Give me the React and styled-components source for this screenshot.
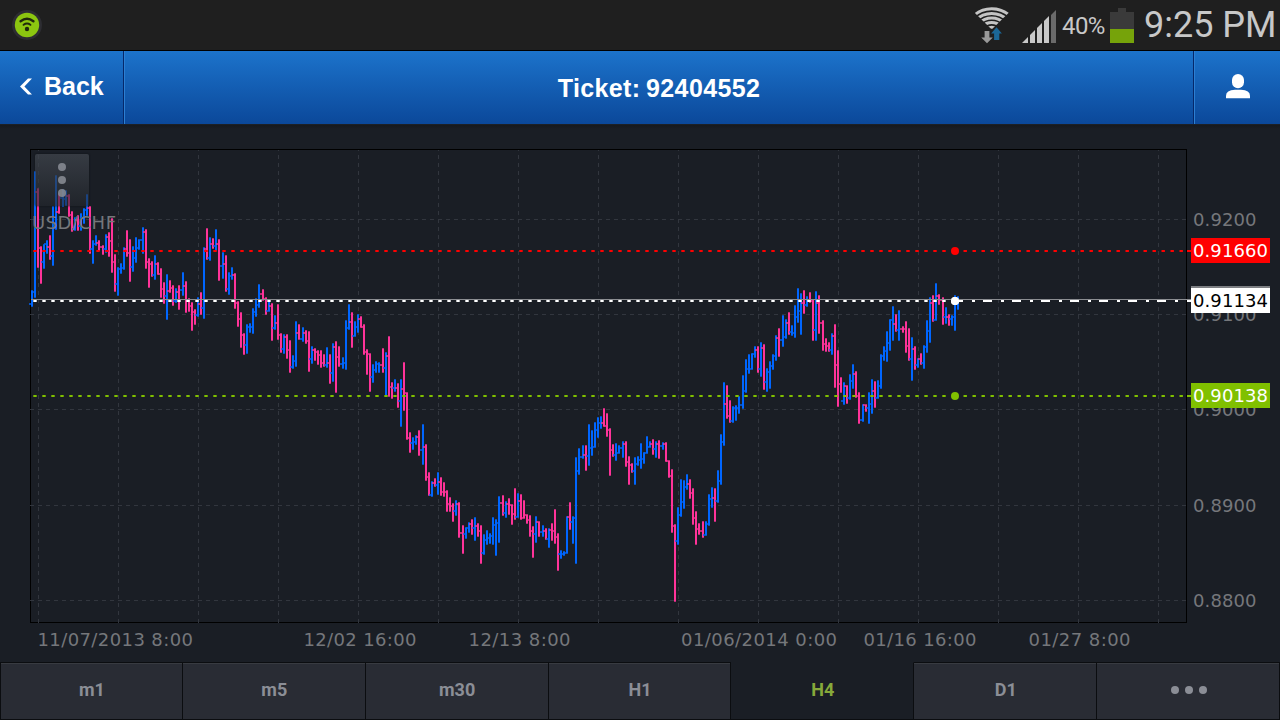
import React from "react";
import styled, { createGlobalStyle } from "styled-components";

const UP = "#0066ff";
const DOWN = "#ff3399";

// x, high, low, open, direction (1 = up)
const bars = [
  [32, 290, 307, 304, 1], [35, 171, 298, 292, 1], [38, 188, 268, 192, 0],
  [41, 246, 284, 248, 0], [44, 244, 269, 262, 1], [47, 240, 254, 244, 1],
  [50, 235, 260, 247, 0], [53, 206, 266, 256, 1], [56, 175, 230, 228, 1],
  [59, 193, 214, 212, 0], [63, 189, 207, 198, 1], [66, 190, 206, 199, 1],
  [69, 194, 217, 196, 0], [72, 211, 232, 215, 0], [75, 217, 231, 229, 1],
  [78, 215, 231, 220, 0], [81, 213, 231, 226, 1], [84, 208, 224, 218, 1],
  [87, 194, 216, 210, 1], [90, 206, 254, 208, 0], [93, 240, 264, 249, 1],
  [96, 235, 246, 244, 1], [99, 240, 251, 243, 0], [103, 245, 255, 247, 0],
  [106, 234, 253, 249, 1], [109, 232, 257, 237, 0], [112, 218, 273, 241, 0],
  [115, 254, 292, 262, 0], [118, 267, 296, 284, 1], [121, 263, 274, 269, 1],
  [124, 247, 270, 268, 1], [127, 230, 257, 249, 0], [130, 239, 282, 253, 0],
  [133, 246, 272, 267, 1], [136, 237, 263, 258, 1], [139, 239, 250, 248, 1],
  [143, 227, 254, 240, 1], [146, 229, 269, 232, 0], [149, 258, 288, 262, 0],
  [152, 261, 277, 264, 0], [155, 255, 280, 275, 1], [158, 262, 275, 264, 0],
  [161, 268, 298, 274, 0], [164, 282, 304, 289, 0], [167, 274, 320, 296, 1],
  [170, 280, 293, 291, 0], [173, 285, 306, 288, 0], [176, 288, 303, 301, 1],
  [179, 285, 310, 292, 0], [183, 272, 296, 290, 1], [186, 281, 313, 286, 0],
  [189, 298, 312, 300, 0], [192, 302, 331, 306, 0], [195, 309, 325, 312, 0],
  [198, 297, 317, 315, 1], [201, 292, 315, 304, 0], [204, 247, 319, 308, 1],
  [207, 228, 260, 249, 0], [210, 237, 261, 258, 1], [213, 238, 249, 244, 0],
  [216, 229, 251, 246, 1], [219, 239, 281, 244, 0], [223, 252, 279, 266, 1],
  [226, 255, 292, 264, 0], [229, 272, 295, 289, 1], [232, 267, 280, 276, 1],
  [235, 273, 309, 275, 0], [238, 301, 327, 303, 0], [241, 312, 348, 319, 0],
  [244, 333, 355, 335, 0], [247, 324, 354, 345, 1], [250, 323, 333, 327, 1],
  [253, 308, 334, 327, 1], [256, 298, 317, 312, 1], [259, 284, 308, 305, 1],
  [263, 289, 301, 294, 0], [266, 297, 315, 299, 0], [269, 301, 312, 311, 1],
  [272, 303, 341, 306, 0], [275, 315, 330, 328, 1], [278, 304, 340, 323, 0],
  [281, 333, 353, 335, 0], [284, 334, 354, 349, 1], [287, 334, 359, 337, 0],
  [290, 340, 373, 350, 0], [293, 355, 369, 367, 1], [296, 321, 367, 361, 1],
  [299, 324, 340, 333, 0], [303, 327, 342, 339, 1], [306, 330, 344, 333, 0],
  [309, 331, 372, 341, 0], [312, 346, 364, 359, 1], [315, 348, 361, 350, 0],
  [318, 350, 365, 352, 0], [321, 350, 368, 355, 0], [324, 354, 367, 363, 0],
  [327, 347, 368, 365, 1], [330, 354, 384, 363, 0], [333, 343, 382, 373, 1],
  [336, 341, 393, 347, 0], [339, 346, 367, 357, 0], [343, 357, 369, 364, 1],
  [346, 320, 370, 363, 1], [349, 304, 330, 328, 1], [352, 312, 348, 322, 0],
  [355, 321, 337, 336, 1], [358, 314, 333, 327, 1], [361, 316, 328, 319, 0],
  [364, 324, 355, 327, 0], [367, 349, 375, 352, 0], [370, 353, 392, 354, 0],
  [373, 364, 383, 377, 1], [376, 361, 373, 370, 1], [379, 362, 373, 364, 1],
  [383, 348, 373, 365, 0], [386, 352, 397, 368, 1], [389, 336, 397, 356, 0],
  [392, 382, 399, 387, 0], [395, 379, 392, 388, 1], [398, 383, 408, 388, 0],
  [401, 379, 427, 401, 1], [404, 362, 411, 389, 0], [407, 392, 440, 393, 0],
  [410, 432, 453, 438, 0], [413, 437, 450, 443, 1], [416, 435, 445, 442, 1],
  [419, 430, 456, 437, 0], [423, 424, 465, 450, 1], [426, 444, 481, 447, 0],
  [429, 472, 496, 477, 0], [432, 481, 497, 495, 1], [435, 478, 487, 483, 0],
  [438, 472, 495, 485, 1], [441, 477, 496, 482, 0], [444, 482, 497, 492, 0],
  [447, 490, 512, 492, 0], [450, 497, 512, 504, 0], [453, 503, 522, 506, 0],
  [456, 500, 516, 511, 1], [459, 502, 538, 504, 0], [463, 525, 554, 533, 0],
  [466, 527, 539, 534, 1], [469, 522, 533, 528, 1], [472, 519, 535, 524, 0],
  [475, 517, 541, 528, 1], [478, 523, 537, 526, 0], [481, 525, 564, 531, 0],
  [484, 534, 555, 553, 1], [487, 530, 545, 540, 1], [490, 533, 544, 538, 1],
  [493, 517, 545, 536, 1], [496, 519, 556, 525, 1], [499, 496, 543, 523, 1],
  [503, 495, 516, 503, 0], [506, 501, 518, 513, 1], [509, 498, 515, 504, 0],
  [512, 504, 525, 505, 0], [515, 488, 520, 514, 0], [518, 493, 518, 517, 1],
  [521, 494, 520, 501, 0], [524, 500, 519, 518, 0], [527, 514, 524, 515, 0],
  [530, 515, 537, 520, 0], [533, 526, 558, 531, 0], [536, 516, 543, 534, 1],
  [539, 521, 537, 522, 0], [543, 525, 537, 532, 1], [546, 528, 540, 531, 0],
  [549, 528, 548, 539, 1], [552, 523, 541, 530, 0], [555, 509, 544, 531, 0],
  [558, 533, 571, 537, 0], [561, 550, 559, 554, 1], [564, 551, 556, 554, 1],
  [567, 516, 554, 553, 1], [570, 502, 530, 517, 0], [573, 516, 544, 522, 1],
  [576, 457, 564, 518, 1], [579, 448, 475, 471, 1], [583, 445, 459, 457, 1],
  [586, 445, 471, 455, 0], [589, 424, 466, 456, 1], [592, 430, 456, 448, 1],
  [595, 422, 448, 447, 1], [598, 417, 438, 430, 1], [601, 416, 429, 423, 1],
  [604, 408, 427, 423, 0], [607, 413, 437, 426, 0], [610, 428, 476, 430, 0],
  [613, 444, 457, 450, 0], [616, 443, 461, 455, 1], [619, 445, 454, 453, 1],
  [623, 441, 458, 448, 1], [626, 441, 467, 444, 0], [629, 456, 485, 462, 0],
  [632, 463, 473, 465, 0], [635, 457, 485, 471, 1], [638, 456, 466, 464, 1],
  [641, 443, 469, 460, 1], [644, 452, 464, 459, 1], [647, 436, 454, 453, 1],
  [650, 441, 448, 447, 1], [653, 439, 455, 444, 0], [656, 441, 458, 449, 1],
  [659, 440, 459, 444, 0], [663, 442, 450, 446, 1], [666, 442, 462, 444, 0],
  [669, 460, 478, 461, 0], [672, 469, 533, 476, 0], [675, 524, 602, 526, 0],
  [678, 507, 545, 541, 1], [681, 479, 517, 515, 1], [684, 480, 509, 502, 1],
  [687, 474, 490, 487, 1], [690, 479, 499, 484, 0], [693, 488, 525, 493, 0],
  [696, 511, 545, 518, 0], [699, 523, 535, 529, 0], [703, 521, 538, 531, 0],
  [706, 521, 536, 535, 1], [709, 494, 526, 524, 1], [712, 487, 508, 499, 1],
  [715, 488, 522, 498, 0], [718, 470, 503, 501, 1], [721, 434, 485, 481, 1],
  [724, 382, 446, 442, 1], [727, 385, 419, 404, 0], [730, 400, 423, 416, 0],
  [733, 406, 423, 421, 1], [736, 405, 421, 408, 1], [739, 396, 414, 408, 1],
  [743, 375, 409, 405, 1], [746, 359, 393, 391, 1], [749, 354, 374, 369, 1],
  [752, 353, 370, 369, 1], [755, 346, 358, 354, 1], [758, 346, 373, 350, 0],
  [761, 342, 377, 369, 1], [764, 344, 390, 348, 0], [767, 368, 392, 382, 1],
  [770, 361, 389, 372, 1], [773, 354, 370, 366, 1], [776, 335, 361, 356, 1],
  [779, 328, 357, 338, 0], [783, 315, 347, 340, 1], [786, 319, 339, 337, 1],
  [789, 312, 335, 323, 0], [792, 325, 336, 332, 1], [795, 305, 338, 333, 1],
  [798, 288, 323, 317, 1], [801, 293, 335, 311, 1], [804, 290, 314, 303, 0],
  [807, 296, 307, 305, 1], [810, 292, 303, 300, 0], [813, 299, 341, 301, 0],
  [816, 291, 341, 330, 1], [819, 295, 334, 303, 0], [823, 320, 351, 323, 0],
  [826, 338, 352, 344, 0], [829, 342, 352, 346, 0], [832, 333, 355, 350, 1],
  [835, 324, 388, 336, 0], [838, 350, 407, 365, 0], [841, 377, 393, 384, 0],
  [844, 382, 405, 401, 1], [847, 385, 404, 386, 0], [850, 374, 400, 398, 1],
  [853, 364, 389, 381, 1], [856, 371, 398, 374, 0], [859, 392, 424, 396, 0],
  [863, 404, 422, 420, 1], [866, 404, 412, 405, 0], [869, 392, 424, 408, 1],
  [872, 379, 414, 404, 1], [875, 381, 408, 391, 0], [878, 380, 399, 398, 1],
  [881, 354, 389, 386, 1], [884, 346, 361, 356, 1], [887, 331, 362, 351, 1],
  [890, 319, 351, 343, 1], [893, 306, 341, 320, 1], [896, 314, 332, 324, 0],
  [899, 310, 341, 330, 1], [903, 326, 333, 329, 0], [906, 321, 353, 329, 0],
  [909, 328, 361, 346, 0], [912, 337, 381, 359, 1], [915, 346, 370, 349, 0],
  [918, 358, 368, 365, 1], [921, 353, 365, 359, 0], [924, 345, 369, 363, 1],
  [927, 320, 353, 347, 1], [930, 297, 343, 331, 1], [933, 295, 322, 303, 0],
  [936, 283, 321, 320, 1], [939, 294, 305, 296, 0], [943, 297, 325, 300, 0],
  [946, 307, 324, 317, 1], [949, 314, 326, 317, 0], [952, 315, 326, 319, 1],
  [955, 295, 331, 317, 1], [958, 296, 310, 301, 1],
];

const gridX = Array.from({ length: 15 }, (_, i) => 38 + i * 80);

const prices = [
  { label: "0.9200", y: 219 },
  { label: "0.9100", y: 314 },
  { label: "0.9000", y: 409 },
  { label: "0.8900", y: 505 },
  { label: "0.8800", y: 600 },
];

const dates = [
  { label: "11/07/2013 8:00", x: 37.5, width: 155.5 },
  { label: "12/02 16:00", x: 303.5, width: 113 },
  { label: "12/13 8:00", x: 468.5, width: 102 },
  { label: "01/06/2014 0:00", x: 681, width: 156 },
  { label: "01/16 16:00", x: 863.5, width: 113 },
  { label: "01/27 8:00", x: 1028.5, width: 102 },
];

const levels = [
  { label: "0.91660", y: 251, color: "#ff0000", text: "#fff" },
  { label: "0.91134", y: 301, color: "#ffffff", text: "#000", current: true },
  { label: "0.90138", y: 396, color: "#80c000", text: "#fff" },
];

const periods = ["m1", "m5", "m30", "H1", "H4", "D1"];

const StatusBar = () => (
  <Status>
    <svg width="32" height="32" viewBox="0 0 32 32">
      <circle cx="16" cy="16" r="15" fill="#2d2d32" />
      <circle cx="16" cy="16" r="12.2" fill="#8cc610" />
      <g fill="none" stroke="#20280c" strokeLinecap="round">
        <path d="M9.6 12.2q6.4-4.8 12.8 0" strokeWidth="2.5" />
        <path d="M12.6 15.8q3.4-2.4 6.8 0" strokeWidth="2" />
      </g>
      <circle cx="16" cy="20" r="2.2" fill="#20280c" />
    </svg>
    <StatusRight>
      <WifiIcon />
      <SignalIcon />
      <Percent>40%</Percent>
      <Battery />
      <Clock>9:25 PM</Clock>
    </StatusRight>
  </Status>
);

const WifiIcon = () => (
  <svg width="36" height="38" viewBox="974 6 36 38">
    <clipPath id="fan">
      <path d="M991.7 29.5L974.4 12.4V6h34.6v6.4z" />
    </clipPath>
    <g clipPath="url(#fan)" fill="none" stroke="#c4c4c4" strokeWidth="3">
      <circle cx="991.7" cy="36" r="27.2" />
      <circle cx="991.7" cy="36" r="22.6" />
      <circle cx="991.7" cy="36" r="18" />
      <circle cx="991.7" cy="36" r="13.5" />
      <circle cx="991.7" cy="36" r="8.8" />
    </g>
    <path d="M984.6 31h4.8v6.4h3.4l-5.8 5.9-5.8-5.9h3.4z" fill="#999" />
    <path d="M996.5 27.2l5.4 6.2h-2.6V40h-5.2v-6.6h-3z" fill="#1b6797" />
  </svg>
);

const SignalIcon = () => (
  <svg width="36" height="34" viewBox="1021 10 36 34">
    <g fill="#c8c8c8">
      <path d="M1022 43l6-6v6z" />
      <path d="M1030 43v-8l5-5v13z" />
      <path d="M1037 43V28l5-5v20z" />
      <path d="M1044 43V21l5-5v27z" />
    </g>
    <path d="M1051 43V15l5-5v33z" fill="#6a6a6a" />
  </svg>
);

const Chart = () => (
  <Plot width="1280" height="537" viewBox="0 125 1280 537">
    <rect x="30.5" y="149.5" width="1156" height="473" fill="none" stroke="#000" />
    <g stroke="#32363e" strokeDasharray="4 4">
      {gridX.map((x) => (
        <path key={x} d={`M${x + 0.5} 623V150`} />
      ))}
      {prices.map(({ y }) => (
        <path key={y} d={`M30 ${y + 0.5}H1187`} />
      ))}
    </g>

    {bars.map(([x, high, low, open, up]) => (
      <g key={x} fill={up ? UP : DOWN}>
        <rect x={x - 1} y={high + 0.3} width="2" height={low - high - 0.6} />
        <rect x={x - 3} y={open - 1} width="2" height="2" opacity=".7" />
      </g>
    ))}

    {levels.map(({ y, color, current }) => (
      <g key={y} stroke={color} strokeWidth="2">
        <path d={`M33.3 ${y}H950`} strokeDasharray="3.4 5.6" />
        <path
          d={`M${current ? 954 : 954.5} ${y}H1185`}
          strokeDasharray={current ? "9 9 3 8" : "3.4 5.6"}
        />
        <path d={`M1187 ${y}h4`} />
        <circle cx="955" cy={y} r="4" fill={color} stroke="none" />
      </g>
    ))}
    <path d="M31 299.5H1191" stroke="#8b8d91" />
    <circle cx="955" cy="301" r="4" fill="#fff" />

    <AxisLabel x="32" y="229" textLength="84">
      USD/CHF
    </AxisLabel>
    {prices.map(({ label, y }) => (
      <AxisLabel key={label} x="1193" y={y + 7} textLength="63.5">
        {label}
      </AxisLabel>
    ))}
    {dates.map(({ label, x, width }) => (
      <AxisLabel key={label} x={x} y="646" textLength={width}>
        {label}
      </AxisLabel>
    ))}

    <rect x="1191" y="286" width="79" height="2" fill="#7d7f83" />
    {levels.map(({ label, y, color, text }) => (
      <g key={label}>
        <rect x="1191" y={y - 13} width="79" height="25" fill={color} />
        <AxisLabel x="1193" y={y + 6} textLength="75" $color={text}>
          {label}
        </AxisLabel>
      </g>
    ))}
  </Plot>
);

const App = () => {
  return (
    <Screen>
      <GlobalStyle />
      <StatusBar />
      <Header>
        <BackButton>
          <svg width="12" height="17" viewBox="0 0 12 17">
            <path d="M8 .5h4L4.4 8.5l7.6 8H8L0 8.5z" fill="#fff" />
          </svg>
          Back
        </BackButton>
        <Title>Ticket: 92404552</Title>
        <UserButton>
          <svg width="24" height="25" viewBox="0 0 24 25">
            <rect x="6" y="0" width="12" height="14.2" rx="6" fill="#fff" />
            <path d="M0 24.3v-2.6q0-5.6 9-5.9h6q9 .3 9 5.9v2.6z" fill="#fff" />
          </svg>
        </UserButton>
      </Header>
      <ChartArea>
        <Chart />
        <MenuButton>
          <Dot />
          <Dot />
          <Dot />
        </MenuButton>
      </ChartArea>
      <Tabs>
        {periods.map((period) => (
          <Tab key={period} $active={period === "H4"}>
            {period}
          </Tab>
        ))}
        <Tab>
          <Dot />
          <Dot />
          <Dot />
        </Tab>
      </Tabs>
    </Screen>
  );
};

const GlobalStyle = createGlobalStyle`
  * {
    box-sizing: border-box;
  }

  body {
    margin: 0;
    background: #1a1e25;
  }

  button {
    margin: 0;
    border: 0;
    padding: 0;
    background: none;
  }
`;

const Screen = styled.div`
  width: 1280px;
  height: 720px;
  display: flex;
  flex-direction: column;
  overflow: hidden;
  background: #1a1e25;
`;

const Status = styled.div`
  height: 51px;
  flex: none;
  display: flex;
  align-items: center;
  justify-content: space-between;
  padding: 0 4px 0 11px;
  background: #1f1f1f;
  border-bottom: 1px solid #000;
  color: #c8c8c8;
  font-family: Roboto, sans-serif;
`;

const StatusRight = styled.div`
  height: 50px;
  display: flex;
  align-items: center;

  svg {
    margin-right: 11px;
  }

  svg + svg {
    margin: 3px 5px 0 0;
  }
`;

const Percent = styled.span`
  width: 48px;
  font-size: 24px;
  line-height: 28px;
  letter-spacing: -0.6px;
  padding-top: 2px;
`;

const Battery = styled.div`
  width: 24px;
  height: 35px;
  margin-right: 10px;
  display: flex;
  flex-direction: column;
  align-items: center;
  background: linear-gradient(#3a3a3a 17px, #76a30a 17px) 0 4px no-repeat;

  &::before {
    content: "";
    width: 8px;
    height: 4px;
    background: #3a3a3a;
  }
`;

const Clock = styled.span`
  width: 132px;
  font-size: 36px;
  line-height: 42px;
  white-space: nowrap;
`;

const Header = styled.header`
  height: 74px;
  flex: none;
  display: flex;
  background: linear-gradient(#1c73cb, #0b489a);
  border-bottom: 1px solid #1c2026;
  color: #fff;
  font: bold 25px "Liberation Sans", sans-serif;
`;

const BackButton = styled.button`
  width: 124px;
  display: flex;
  align-items: center;
  gap: 12px;
  padding: 0 0 3px 20px;
  border-right: 1px solid #05286a;
  color: inherit;
  font: inherit;

  svg {
    margin-top: 1px;
  }
`;

const Title = styled.h1`
  flex: 1;
  margin: 0;
  padding-top: 2px;
  border-left: 1px solid #2c7fd2;
  border-right: 1px solid #05286a;
  display: flex;
  align-items: center;
  justify-content: center;
  font: inherit;
  letter-spacing: 0.35px;
  word-spacing: -1.6px;
`;

const UserButton = styled.button`
  width: 86px;
  padding-bottom: 2px;
  border-left: 1px solid #2c7fd2;
  display: flex;
  align-items: center;
  justify-content: center;
`;

const ChartArea = styled.main`
  position: relative;
  flex: 1;
  background: linear-gradient(#16191e, #1a1e25 4px);
`;

const Plot = styled.svg`
  display: block;
`;

const AxisLabel = styled.text`
  fill: ${(props) => props.$color || "#75777b"};
  font-family: "DejaVu Sans", sans-serif;
  font-size: 18px;
`;

const Dot = styled.span`
  width: 8px;
  height: 8px;
  border-radius: 50%;
  background: #8b8e96;
`;

const MenuButton = styled.button`
  position: absolute;
  top: 29px;
  left: 35px;
  width: 54px;
  height: 52px;
  display: flex;
  flex-direction: column;
  align-items: center;
  gap: 5px;
  padding-top: 9px;
  border-radius: 2px;
  background: linear-gradient(rgba(64, 69, 77, 0.75), rgba(36, 40, 46, 0.6));
  box-shadow: 0 0 2px #0e1115;

  ${Dot} {
    opacity: 0.85;
  }
`;

const Tabs = styled.nav`
  height: 58px;
  flex: none;
  display: grid;
  grid-template-columns: repeat(7, 1fr);
  border-bottom: 1px solid #0b0d10;
`;

const Tab = styled.button`
  display: flex;
  align-items: center;
  justify-content: center;
  gap: 6px;
  padding: 0 0 3px 1px;
  border-top: 1px solid ${(props) => (props.$active ? "#1a1e25" : "#0b0d10")};
  border-right: 1px solid #0b0d10;
  background: ${(props) => (props.$active ? "#1a1e25" : "#292c34")};
  box-shadow: ${(props) => (props.$active ? "none" : "inset 0 1px #383b41")};
  color: ${(props) => (props.$active ? "#86a93a" : "#8b8e96")};
  font: bold 18px Roboto, sans-serif;

  &:first-child {
    border-left: 1px solid #0b0d10;
  }
`;

export default App;
